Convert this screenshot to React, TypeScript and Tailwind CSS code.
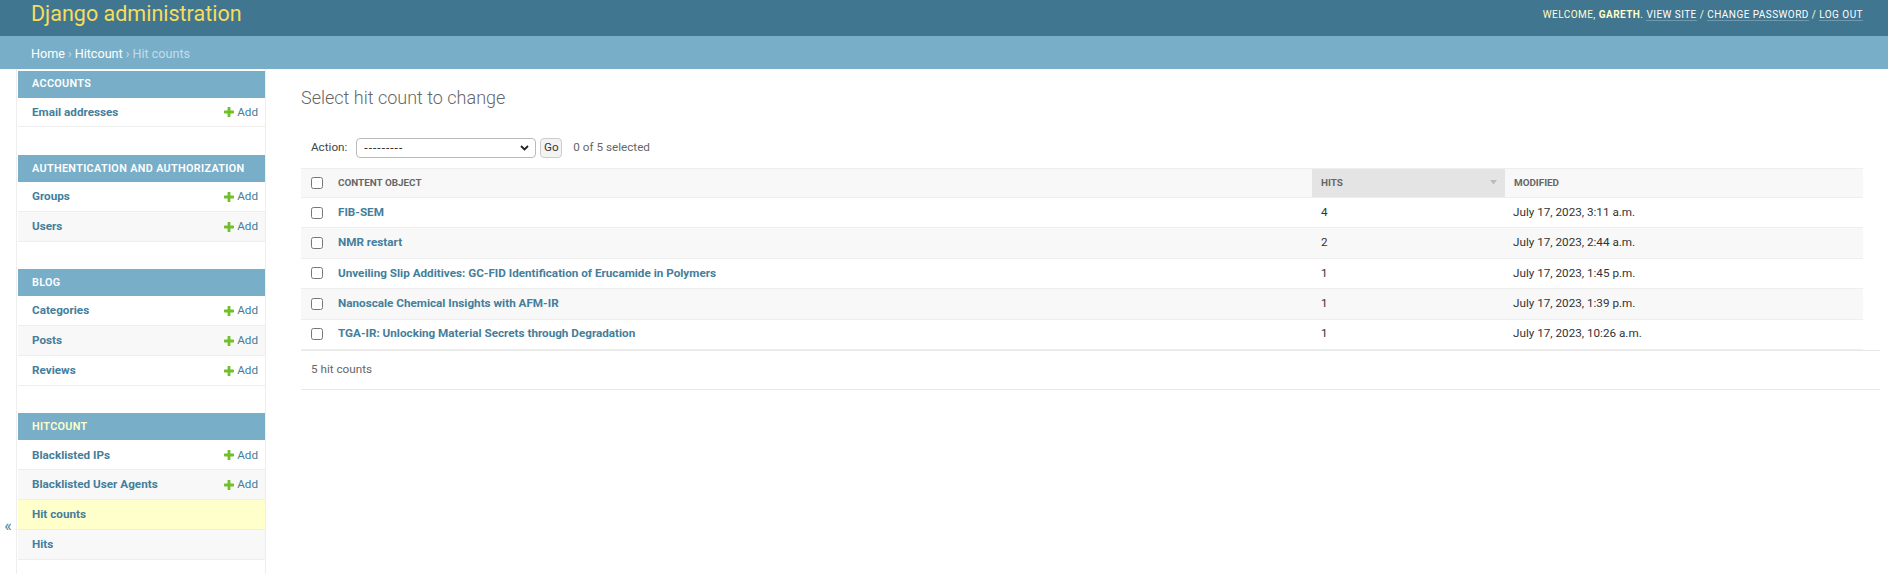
import React from "react";

type Row = { name: string; add?: boolean; current?: boolean };
type Mod = { name: string; current?: boolean; rows: Row[] };

const modules: Mod[] = [
    { name: "Accounts", rows: [{ name: "Email addresses", add: true }] },
    {
        name: "Authentication and Authorization",
        rows: [
            { name: "Groups", add: true },
            { name: "Users", add: true },
        ],
    },
    {
        name: "Blog",
        rows: [
            { name: "Categories", add: true },
            { name: "Posts", add: true },
            { name: "Reviews", add: true },
        ],
    },
    {
        name: "Hitcount",
        current: true,
        rows: [
            { name: "Blacklisted IPs", add: true },
            { name: "Blacklisted User Agents", add: true },
            { name: "Hit counts", current: true },
            { name: "Hits" },
        ],
    },
];

const hits = [
    { title: "FIB-SEM", hits: 4, modified: "July 17, 2023, 3:11 a.m." },
    { title: "NMR restart", hits: 2, modified: "July 17, 2023, 2:44 a.m." },
    { title: "Unveiling Slip Additives: GC-FID Identification of Erucamide in Polymers", hits: 1, modified: "July 17, 2023, 1:45 p.m." },
    { title: "Nanoscale Chemical Insights with AFM-IR", hits: 1, modified: "July 17, 2023, 1:39 p.m." },
    { title: "TGA-IR: Unlocking Material Secrets through Degradation", hits: 1, modified: "July 17, 2023, 10:26 a.m." },
];

function PlusIcon() {
    return (
        <svg width="10" height="10" viewBox="0 0 10 10" className="shrink-0">
            <rect x="3.6" y="0" width="2.8" height="10" rx="0.6" fill="#70bf2b" />
            <rect x="0" y="3.6" width="10" height="2.8" rx="0.6" fill="#70bf2b" />
        </svg>
    );
}

function Sidebar() {
    return (
        <nav className="w-[249px] shrink-0 border-r border-[#eee] pt-[1.5px] pl-[1px]">
            {modules.map((m) => (
                <div key={m.name} className="mb-[27.5px]">
                    <div
                        className={
                            "h-[27px] flex items-center pl-[14px] pt-[1px] bg-[#79aec8] text-[10.8px] font-semibold uppercase tracking-[0.35px] " +
                            (m.current ? "text-[#ffffcc]" : "text-white")
                        }
                    >
                        {m.name}
                    </div>
                    {m.rows.map((r, i) => (
                        <div
                            key={r.name}
                            className={
                                "h-[29.9px] flex items-center justify-between pl-[14px] pr-[7px] pt-[1px] border-b border-[#eee] " +
                                (r.current ? "bg-[#ffffcc]" : i % 2 === 1 ? "bg-[#f8f8f8]" : "bg-white")
                            }
                        >
                            <span className="text-[11.7px] font-bold text-[#447e9b]">{r.name}</span>
                            {r.add && (
                                <span className="flex items-center gap-[3px] text-[11.7px] text-[#447e9b]">
                                    <PlusIcon />
                                    Add
                                </span>
                            )}
                        </div>
                    ))}
                </div>
            ))}
        </nav>
    );
}

function Checkbox() {
    return <input type="checkbox" className="w-[12px] h-[12px] m-0 block" />;
}

function ChangeList() {
    return (
        <div>
            <div className="h-[20px] mt-[29px] flex items-center text-[11.7px]">
                <span className="ml-[10px] mr-[9px] text-[#444]">Action:</span>
                <div className="relative">
                    <select className="appearance-none w-[180px] h-[20px] border border-[#bbb] rounded-[4px] bg-white pl-[7px] text-[12px] tracking-[1px] text-[#333] leading-[18px]">
                        <option>---------</option>
                    </select>
                    <svg
                        width="9"
                        height="6"
                        viewBox="0 0 9 6"
                        className="absolute right-[7px] top-[7px] pointer-events-none"
                    >
                        <path d="M1 1l3.5 3.5L8 1" stroke="#222" strokeWidth="1.8" fill="none" />
                    </svg>
                </div>
                <button className="ml-[4px] w-[22px] h-[20px] border border-[#ccc] rounded-[4px] bg-[#f3f3f3] text-[11.7px] text-[#333]">
                    Go
                </button>
                <span className="ml-[11px] text-[#666]">0 of 5 selected</span>
            </div>

            <table className="mt-[10px] w-[1562px] table-fixed border-collapse text-[11.7px]">
                <colgroup>
                    <col className="w-[30px]" />
                    <col className="w-[981px]" />
                    <col className="w-[193px]" />
                    <col className="w-[358px]" />
                </colgroup>
                <thead>
                    <tr className="h-[29px] bg-[#f8f8f8] border-t border-b border-[#eee] text-[9.9px] font-bold uppercase text-[#666] text-left">
                        <th className="pl-[10px]">
                            <Checkbox />
                        </th>
                        <th className="pl-[7px] font-bold">Content object</th>
                        <th className="pl-[9px] pr-[8px] bg-[#e4e4e4] font-bold">
                            <div className="flex items-center justify-between">
                                <span>Hits</span>
                                <svg width="7" height="5" viewBox="0 0 7 5">
                                    <path d="M0 0h7L3.5 4.5z" fill="#bbb" />
                                </svg>
                            </div>
                        </th>
                        <th className="pl-[9px] font-bold">Modified</th>
                    </tr>
                </thead>
                <tbody>
                    {hits.map((h, i) => (
                        <tr
                            key={h.title}
                            className={
                                "h-[30.4px] border-b border-[#eee] " + (i % 2 === 1 ? "bg-[#f8f8f8]" : "bg-white")
                            }
                        >
                            <td className="pl-[10px]">
                                <Checkbox />
                            </td>
                            <td className="pl-[7px] font-bold text-[#447e9b]">{h.title}</td>
                            <td className="pl-[9px] text-[#333]">{h.hits}</td>
                            <td className="pl-[8px] text-[#333]">{h.modified}</td>
                        </tr>
                    ))}
                </tbody>
            </table>
            <div className="w-[1579px] h-[40px] border-t border-b border-[#e8e8e8] flex items-center pl-[10px] text-[11.7px] text-[#666]">
                5 hit counts
            </div>
        </div>
    );
}

export default function App() {
    return (
        <div className="min-h-[574px] flex flex-col bg-white font-['Roboto','Liberation_Sans',sans-serif] text-[#333]">
            <header className="h-[36px] shrink-0 bg-[#417690] flex items-start justify-between pl-[31px] pr-[25px]">
                <div className="mt-[1px] text-[21.5px] leading-[26px] text-[#f5dd5d]">Django administration</div>
                <div className="mt-[9px] text-[10px] leading-[12px] uppercase tracking-[0.45px] text-[#ffffcc]">
                    Welcome, <strong className="font-bold">gareth</strong>.{" "}
                    <a className="text-white border-b border-white/25">View site</a> /{" "}
                    <a className="text-white border-b border-white/25">Change password</a> /{" "}
                    <a className="text-white border-b border-white/25">Log out</a>
                </div>
            </header>
            <div className="h-[33px] shrink-0 bg-[#79aec8] flex items-center pt-[3px] pl-[31px] text-[12.6px] text-[#c4dce8]">
                <a className="text-white">Home</a>
                <span className="mx-[3px]">›</span>
                <a className="text-white">Hitcount</a>
                <span className="mx-[3px]">›</span>
                <span>Hit counts</span>
            </div>
            <div className="flex flex-1">
                <div className="w-[17px] shrink-0 border-r border-[#eee] flex justify-center pt-[447px]">
                    <span className="text-[16px] leading-[20px] text-[#447e9b]">«</span>
                </div>
                <Sidebar />
                <main className="flex-1 pl-[35px] pt-[18px]">
                    <h1 className="text-[18px] leading-[22px] font-light text-[#666]">Select hit count to change</h1>
                    <ChangeList />
                </main>
            </div>
        </div>
    );
}
